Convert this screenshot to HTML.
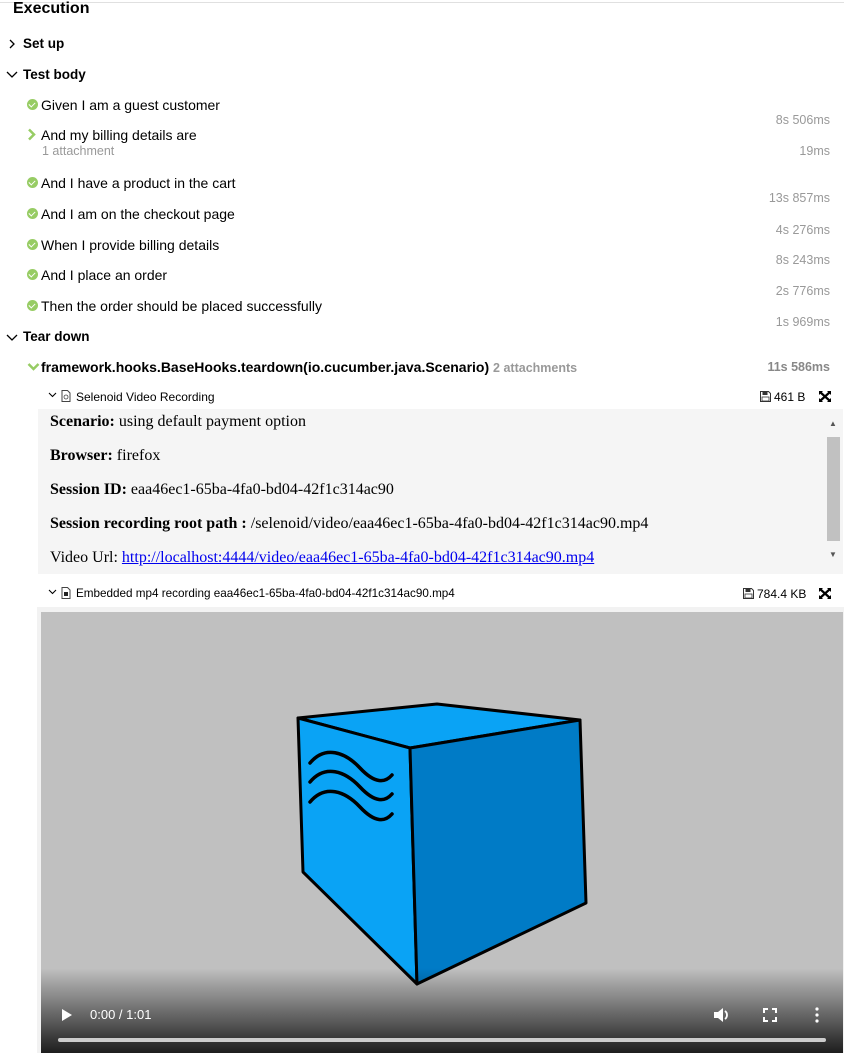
<!DOCTYPE html>
<html><head><meta charset="utf-8"><style>
body{margin:0;width:844px;height:1053px;background:#fff;position:relative;overflow:hidden;font-family:"Liberation Sans",Arial,sans-serif;color:#000}
.a{position:absolute;white-space:nowrap}
.h{font-weight:bold;font-size:13.5px}
.s{font-size:14px}
.d{font-size:12.5px;color:#999;right:14px}
.ok{position:absolute;width:11px;height:11px;border-radius:50%;background:#97cc64}
.ok:after{content:"";position:absolute;left:3px;top:2px;width:3px;height:5px;border:solid #fff;border-width:0 1.6px 1.6px 0;transform:rotate(45deg)}
.ser{font-family:"Liberation Serif",serif;font-size:16px}
</style></head><body>
<div style="position:absolute;left:0;top:2px;width:844px;height:1px;background:#e0e0e0"></div>
<div class="a" style="left:13px;top:0px;font-size:16px;font-weight:bold">Execution</div>

<svg class="a" style="left:7px;top:38px" width="10" height="12"><path d="M3 2l4 4-4 4" fill="none" stroke="#000" stroke-width="1.3"/></svg>
<div class="a h" style="left:23px;top:36px">Set up</div>
<svg class="a" style="left:6px;top:69px" width="12" height="10"><path d="M1 3l5 5 5-5" fill="none" stroke="#000" stroke-width="1.3"/></svg>
<div class="a h" style="left:23px;top:67px">Test body</div>

<div class="ok" style="left:27px;top:99px"></div><div class="a s" style="left:41px;top:97px">Given I am a guest customer</div>
<div class="a d" style="top:113px">8s 506ms</div>
<svg class="a" style="left:27px;top:128px" width="10" height="13"><path d="M2 1.5l5 5-5 5" fill="none" stroke="#97cc64" stroke-width="2.5"/></svg>
<div class="a s" style="left:41px;top:127px">And my billing details are</div>
<div class="a" style="left:42px;top:144px;font-size:12.5px;color:#999">1 attachment</div>
<div class="a d" style="top:144px">19ms</div>
<div class="ok" style="left:27px;top:177px"></div><div class="a s" style="left:41px;top:175px">And I have a product in the cart</div>
<div class="a d" style="top:191px">13s 857ms</div>
<div class="ok" style="left:27px;top:208px"></div><div class="a s" style="left:41px;top:206px">And I am on the checkout page</div>
<div class="a d" style="top:223px">4s 276ms</div>
<div class="ok" style="left:27px;top:239px"></div><div class="a s" style="left:41px;top:237px">When I provide billing details</div>
<div class="a d" style="top:253px">8s 243ms</div>
<div class="ok" style="left:27px;top:269px"></div><div class="a s" style="left:41px;top:267px">And I place an order</div>
<div class="a d" style="top:284px">2s 776ms</div>
<div class="ok" style="left:27px;top:300px"></div><div class="a s" style="left:41px;top:298px">Then the order should be placed successfully</div>
<div class="a d" style="top:315px">1s 969ms</div>

<svg class="a" style="left:6px;top:332px" width="12" height="10"><path d="M1 3l5 5 5-5" fill="none" stroke="#000" stroke-width="1.3"/></svg>
<div class="a h" style="left:23px;top:329px">Tear down</div>

<svg class="a" style="left:27px;top:362px" width="13" height="10"><path d="M1.5 2l5 5 5-5" fill="none" stroke="#97cc64" stroke-width="2.5"/></svg>
<div class="a h" style="left:41px;top:359px;font-size:14px">framework.hooks.BaseHooks.teardown(io.cucumber.java.Scenario) <span style="color:#999;font-size:12.5px">2 attachments</span></div>
<div class="a d" style="top:360px;color:#888;font-weight:bold">11s 586ms</div>

<svg class="a" style="left:48px;top:392px" width="9" height="7"><path d="M1 1l3.5 3.5L8 1" fill="none" stroke="#000" stroke-width="1.1"/></svg>
<svg class="a" style="left:61px;top:390px" width="10" height="12"><path d="M1 .5h5.5l2.5 2.5v8.5H1z" fill="#fff" stroke="#444"/><circle cx="5" cy="7" r="2" fill="none" stroke="#444" stroke-width=".8"/></svg>
<div class="a" style="left:76px;top:390px;font-size:12px">Selenoid Video Recording</div>
<svg class="a" style="left:760px;top:391px" width="11" height="11"><path d="M.5.5h8l2 2v8H.5z" fill="#fff" stroke="#333"/><rect x="2.5" y="1" width="5" height="3" fill="#333"/><rect x="2" y="6" width="7" height="4" fill="none" stroke="#333" stroke-width=".8"/></svg>
<div class="a" style="left:774px;top:390px;font-size:12px">461 B</div>
<svg class="a" style="left:819px;top:391px" width="12" height="11"><path d="M1 1l10 9M11 1L1 10" stroke="#000" stroke-width="2.2"/><path d="M0 0h4L0 4zM12 0H8l4 4zM0 11h4L0 7zM12 11H8l4-4z" fill="#000"/></svg>

<div style="position:absolute;left:38px;top:409px;width:805px;height:165px;background:#f5f5f5"></div>
<div class="a" style="left:829px;top:419px;font-size:8px;color:#555">▲</div>
<div style="position:absolute;left:827px;top:437px;width:13px;height:104px;background:#c1c1c1"></div>
<div class="a" style="left:829px;top:550px;font-size:8px;color:#555">▼</div>
<div class="a ser" style="left:50px;top:413px"><b>Scenario:</b> using default payment option</div>
<div class="a ser" style="left:50px;top:447px"><b>Browser:</b> firefox</div>
<div class="a ser" style="left:50px;top:481px"><b>Session ID:</b> eaa46ec1-65ba-4fa0-bd04-42f1c314ac90</div>
<div class="a ser" style="left:50px;top:515px"><b>Session recording root path :</b> /selenoid/video/eaa46ec1-65ba-4fa0-bd04-42f1c314ac90.mp4</div>
<div class="a ser" style="left:50px;top:549px">Video Url: <span style="color:#00e;text-decoration:underline">http://localhost:4444/video/eaa46ec1-65ba-4fa0-bd04-42f1c314ac90.mp4</span></div>

<svg class="a" style="left:48px;top:589px" width="9" height="7"><path d="M1 1l3.5 3.5L8 1" fill="none" stroke="#000" stroke-width="1.1"/></svg>
<svg class="a" style="left:61px;top:587px" width="10" height="12"><path d="M1 .5h5.5l2.5 2.5v8.5H1z" fill="#fff" stroke="#444"/><rect x="3" y="5" width="4" height="4" fill="#222"/></svg>
<div class="a" style="left:76px;top:587px;font-size:11.7px">Embedded mp4 recording eaa46ec1-65ba-4fa0-bd04-42f1c314ac90.mp4</div>
<svg class="a" style="left:743px;top:588px" width="11" height="11"><path d="M.5.5h8l2 2v8H.5z" fill="#fff" stroke="#333"/><rect x="2.5" y="1" width="5" height="3" fill="#333"/><rect x="2" y="6" width="7" height="4" fill="none" stroke="#333" stroke-width=".8"/></svg>
<div class="a" style="left:757px;top:587px;font-size:12px">784.4 KB</div>
<svg class="a" style="left:819px;top:588px" width="12" height="11"><path d="M1 1l10 9M11 1L1 10" stroke="#000" stroke-width="2.2"/><path d="M0 0h4L0 4zM12 0H8l4 4zM0 11h4L0 7zM12 11H8l4-4z" fill="#000"/></svg>

<div style="position:absolute;left:37px;top:607px;width:807px;height:446px;background:#f2f2f2"></div>
<div style="position:absolute;left:41px;top:612px;width:802px;height:441px;background:#c0c0c0;overflow:hidden">
<svg width="802" height="441" style="position:absolute;left:0;top:0">
<g transform="translate(-41,-612)" stroke="#000" stroke-width="3" stroke-linejoin="round">
<path d="M298 718L437 704L580 720L410 748Z" fill="#0aa3f5"/>
<path d="M298 718L410 748L417 984L303 872Z" fill="#0aa3f5"/>
<path d="M410 748L580 720L586 903L417 984Z" fill="#007bc6"/>
<g fill="none" stroke-width="3.5" stroke-linecap="round">
<path d="M310 763C325 745 345 752 360 768S385 783 392 775"/>
<path d="M310 782C325 764 345 771 360 787S385 802 392 794"/>
<path d="M310 802C325 784 345 791 360 807S385 822 392 814"/>
</g></g></svg>
<div style="position:absolute;left:0;bottom:0;width:802px;height:85px;background:linear-gradient(rgba(0,0,0,0),rgba(0,0,0,.85))"></div>
<svg class="a" style="left:20px;top:396px" width="12" height="14"><path d="M1 1l10 6-10 6z" fill="#fff"/></svg>
<div class="a" style="left:49px;top:395px;color:#fff;font-size:13px">0:00 / 1:01</div>
<svg class="a" style="left:672px;top:395px" width="18" height="16"><path d="M1 5h4l5-4v14l-5-4H1z" fill="#fff"/><path d="M12 4a5 5 0 0 1 0 8" fill="none" stroke="#fff" stroke-width="1.8"/></svg>
<svg class="a" style="left:722px;top:396px" width="14" height="14"><path d="M1 5V1h4M9 1h4v4M13 9v4H9M5 13H1V9" fill="none" stroke="#fff" stroke-width="2"/></svg>
<svg class="a" style="left:774px;top:395px" width="4" height="16"><circle cx="2" cy="2" r="1.6" fill="#fff"/><circle cx="2" cy="8" r="1.6" fill="#fff"/><circle cx="2" cy="14" r="1.6" fill="#fff"/></svg>
<div style="position:absolute;left:17px;top:426px;width:768px;height:4px;border-radius:2px;background:#ccc"></div>
</div>
</body></html>
